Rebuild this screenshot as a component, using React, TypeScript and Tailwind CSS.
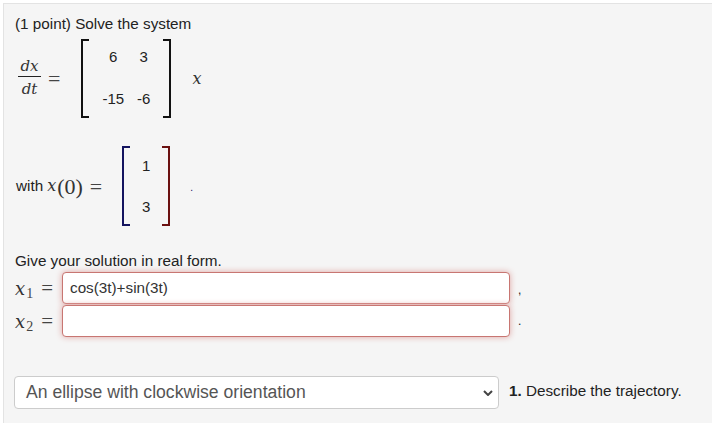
const mathFont = "[font-family:'Liberation_Serif',serif]";
const mathItalic = "[font-family:'DejaVu_Serif',serif] italic text-[#333]";

const Bracket = ({ side, color }: { side: "left" | "right"; color: string }) => (
  <div
    className={
      side === "left"
        ? `w-[8px] h-full border-l-2 border-t-2 border-b-2 ${color}`
        : `w-[8px] h-full border-r-2 border-t-2 border-b-2 ${color}`
    }
  />
);

const Sub = ({ n }: { n: string }) => (
  <div className={`flex items-baseline w-[47px] text-[#444] ${mathFont}`}>
    <span className={`text-[18px] leading-none ${mathItalic}`}>x</span>
    <span className="text-[14px] leading-none translate-y-[3px] ml-[1px]">{n}</span>
    <span className="text-[21px] leading-none ml-[8px]">=</span>
  </div>
);

export default function App() {
  return (
    <div className="w-[712px] h-[423px] overflow-hidden bg-white pl-[3px] pt-[3px] font-['Liberation_Sans',Arial,sans-serif] text-[15.25px] text-[#222]">
      <div className="w-[730px] h-[440px] bg-[#f5f5f5] border border-[#e3e3e3] pl-[11px] pt-[11px]">
        <p className="h-[18px] leading-[18px]">(1 point) Solve the system</p>

        {/* first system */}
        <div className="flex items-center h-[79px] mt-[6px] pl-[3px]">
          <div className="flex flex-col items-center w-[23px]">
            <span className={`text-[15px] leading-[20px] border-b border-[#222] w-full text-center ${mathItalic}`}>dx</span>
            <span className={`text-[15px] leading-[24px] ${mathItalic}`}>dt</span>
          </div>
          <span className={`ml-[7px] text-[22px] text-[#444] ${mathFont}`}>=</span>
          <div className="flex h-[79px] ml-[21px] w-[90px] justify-between">
            <Bracket side="left" color="border-[#111]" />
            <div className="grid grid-cols-[auto_auto] gap-x-[13px] content-between justify-items-center self-stretch pt-[9px] pb-[10px] leading-[18px] text-[15px]">
              <span>6</span>
              <span>3</span>
              <span>-15</span>
              <span>-6</span>
            </div>
            <Bracket side="right" color="border-[#111]" />
          </div>
          <span className={`ml-[21px] text-[16px] ${mathItalic}`}>x</span>
        </div>

        {/* initial value */}
        <div className="flex items-center h-[80px] mt-[28px] pl-[1px]">
          <span>with</span>
          <span className={`ml-[4px] text-[16px] ${mathItalic}`}>x</span>
          <span className={`ml-[1px] text-[22px] text-[#333] ${mathFont}`}>(0)</span>
          <span className={`ml-[7px] text-[22px] text-[#444] ${mathFont}`}>=</span>
          <div className="flex h-[80px] ml-[20px] w-[48px] justify-between">
            <Bracket side="left" color="border-[#14145f]" />
            <div className="flex flex-col justify-between items-center pt-[11px] pb-[10px] leading-[18px] text-[15px]">
              <span>1</span>
              <span>3</span>
            </div>
            <Bracket side="right" color="border-[#6b1010]" />
          </div>
          <span className="ml-[20px] text-[10px] leading-none translate-y-[2px] text-[#14145f]">.</span>
        </div>

        <p className="h-[18px] leading-[18px] mt-[26px]">Give your solution in real form.</p>

        <div className="flex items-center mt-[2px] h-[32px]">
          <Sub n="1" />
          <div className="flex items-center w-[448px] h-[32px] pl-[7px] bg-white border border-[#c87672] rounded-[4px] shadow-[0_0_6px_#dfa5a3] text-[15.25px] text-[#333]">
            cos(3t)+sin(3t)
          </div>
          <span className="ml-[8px] text-[12px] leading-none translate-y-[2px] text-[#222]">,</span>
        </div>
        <div className="flex items-center h-[32px] mt-[1px]">
          <Sub n="2" />
          <div className="w-[448px] h-[32px] bg-white border border-[#c87672] rounded-[4px] shadow-[0_0_6px_#dfa5a3]" />
          <span className="ml-[8px] text-[12px] leading-none text-[#222]">.</span>
        </div>

        <div className="flex items-center mt-[39px] h-[33px] -ml-px">
          <div className="flex items-center justify-between w-[485px] h-[33px] bg-white border border-[#ccc] rounded-[4px] pl-[11px] pr-[5px] text-[17.6px] text-[#555]">
            <span>An ellipse with clockwise orientation</span>
            <svg width="10" height="6" viewBox="0 0 10 6" fill="none" stroke="#444" strokeWidth="2">
              <path d="M1 1l4 4 4-4" />
            </svg>
          </div>
          <p className="ml-[10px] -translate-y-px">
            <b>1.</b> Describe the trajectory.
          </p>
        </div>
      </div>
    </div>
  );
}
